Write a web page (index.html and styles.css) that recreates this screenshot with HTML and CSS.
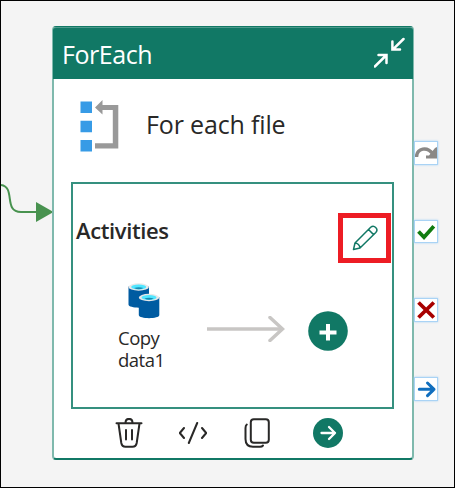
FILE: index.html
```html
<!DOCTYPE html>
<html lang="en">
<head>
<meta charset="utf-8">
<title>ForEach activity</title>
<link rel="stylesheet" href="styles.css">
</head>
<body>
<main class="canvas">
  <svg class="connector" viewBox="0 0 54 50" width="54" height="50"><path d="M0 5C15 7 2 32 20 32H38" fill="none" stroke="#48924f" stroke-width="2"/><path d="M35 22V42L52.500 32Z" fill="#48924f"/></svg>
  <section class="node">
    <header class="node-header">
      <h1 class="node-type">ForEach</h1>
      <svg class="collapse" viewBox="0 0 32 32" width="32" height="32" fill="none" stroke="#fff" stroke-width="2.500" stroke-linecap="round"><path d="M29.500 3L19 13.300M18.400 5.500V13.500H26M.8 30.500L12 19.500M4.500 19H12.500V27"/></svg>
    </header>
    <div class="title-row">
      <svg class="loop-icon" viewBox="0 0 40 52" width="40" height="52"><path fill="#379be6" d="M.5 1.500H12V13H.5ZM.5 20.700H12V32.200H.5ZM.5 40H12V51.500H.5Z"/><path fill="#999" d="M15 7.500L22.500 0V5H38.300V48.500H15V43.300H32.800V10H22.500V14.500Z"/></svg>
      <span class="node-name">For each file</span>
    </div>
    <div class="activities">
      <div class="activities-head">
        <h2 class="activities-title">Activities</h2>
        <button class="edit" aria-label="Edit"><svg viewBox="0 0 26 26" width="26" height="26" fill="none" stroke="#117865" stroke-width="1.500" stroke-linejoin="round"><path d="M1.500 24.500L3 18 18.700 2.300C22 -.7 27 4 23.800 7.500L8 23ZM3 18C5.500 18 8 20.500 8 23M16.500 4.500L21.600 9.600"/></svg></button>
      </div>
      <div class="flow">
        <div class="step">
          <svg viewBox="0 0 32 36" width="32" height="36"><path fill="#005ba1" d="M.5 3.500V21.500C.5 25.700 21 25.700 21 21.500V3.500Z"/><ellipse cx="10.700" cy="4" rx="10.200" ry="3.700" fill="#e8e8e8"/><ellipse cx="10.700" cy="4" rx="7.500" ry="2.400" fill="#50e6ff"/><path d="M6 5Q10.700 3.500 15.500 5Q10.700 7.500 6 5" fill="#198ab3"/><path fill="#005ba1" d="M10.800 14V32C10.800 36.200 31.300 36.200 31.300 32V14Z"/><ellipse cx="21" cy="14.500" rx="10.200" ry="3.700" fill="#e8e8e8"/><ellipse cx="21" cy="14.500" rx="7.500" ry="2.400" fill="#50e6ff"/><path d="M16.300 15.500Q21 14 25.800 15.500Q21 18 16.300 15.500" fill="#198ab3"/></svg>
          <span class="step-name">Copy data1</span>
        </div>
        <svg class="arrow" viewBox="0 0 78 26" width="78" height="26" fill="none" stroke="#c8c6c4" stroke-width="3.500"><path d="M0 13H76"/><path d="M63 1.500L75.500 13 63 24.500" stroke-linecap="round"/></svg>
        <button class="add" aria-label="Add"><svg viewBox="0 0 40 40" width="40" height="40"><circle cx="20" cy="20" r="19.800" fill="#117865"/><path d="M11.500 21.500H28.500M20 13V29.500" stroke="#fff" stroke-width="4"/></svg></button>
      </div>
    </div>
    <footer class="toolbar">
      <svg viewBox="0 0 28 30" width="28" height="30" fill="none" stroke="#292827" stroke-width="2" stroke-linecap="round" stroke-linejoin="round"><path d="M1.500 5.200H26.500M10.500 5C10.500 -.5 17.500 -.5 17.500 5M3.500 5.500L6.300 25Q7 28.700 10.500 28.700H17.500Q21 28.700 21.700 25L24.500 5.500M11 12V21.500M17 12V21.500"/></svg>
      <svg viewBox="0 0 28 22" width="28" height="22" fill="none" stroke="#292827" stroke-width="2" stroke-linecap="round" stroke-linejoin="round"><path d="M5 6L.8 11 5 16M18.200 1L9.800 21M23 6L27.200 11 23 16"/></svg>
      <svg viewBox="0 0 26 30" width="26" height="30" fill="none" stroke="#292827" stroke-width="2" stroke-linecap="round"><rect x="6.800" y="1.200" width="18" height="23.500" rx="3"/><path d="M2.800 6.500Q1.500 7.500 1.500 10V21Q1.500 28.700 9 28.700H16Q18 28.700 19 27.500"/></svg>
      <svg viewBox="0 0 30 30" width="30" height="30" fill="none"><circle cx="15" cy="15" r="15" fill="#117865"/><path d="M8.500 15H22M16 9L22 15 16 21" stroke="#fff" stroke-width="2.300" stroke-linecap="round" stroke-linejoin="round"/></svg>
    </footer>
  </section>
  <div class="ports">
    <span class="port"><svg viewBox="0 0 22 22" width="22" height="22"><path d="M1.500 15C2 6 12 4 18 12" fill="none" stroke="#8a8886" stroke-width="3.500"/><path d="M22 5V16.500H11V13.500H14L20 6Z" fill="#8a8886"/></svg></span>
    <span class="port"><svg viewBox="0 0 22 22" width="22" height="22" fill="none" stroke="#107c10" stroke-width="3.800"><path d="M3.500 10.500L9 16.200 18.800 5.200"/></svg></span>
    <span class="port"><svg viewBox="0 0 22 22" width="22" height="22" fill="none" stroke="#a80000" stroke-width="3.800"><path d="M3.500 3.500L18.800 18.500M18.800 3.500L3.500 18.500"/></svg></span>
    <span class="port"><svg viewBox="0 0 22 22" width="22" height="22" fill="none" stroke="#106ebe" stroke-width="3" stroke-linecap="round" stroke-linejoin="round"><path d="M4.300 11.300H19M12.500 5L19 11.300 12.500 17.600"/></svg></span>
  </div>
</main>
</body>
</html>
```
FILE: styles.css
```css
* { box-sizing: border-box; }
body { margin: 0; font-family: "Open Sans", sans-serif; color: #292827; }
h1, h2 { margin: 0; }
svg { display: block; flex: none; }
button { padding: 0; border: 0; background: none; }

.canvas {
  position: relative;
  width: 455px;
  height: 488px;
  border: 1px solid #000;
  background: #f4f4f4;
  overflow: hidden;
}
.connector { position: absolute; left: 0; top: 179px; }
.node {
  position: absolute;
  left: 51px;
  top: 25px;
  width: 362px;
  height: 434px;
  display: flex;
  flex-direction: column;
  border: 2px solid #7fb9ad;
  border-top: 1px solid #117865;
  border-bottom-color: #117865;
  border-radius: 4px;
  background: #fff;
}
.node-header {
  height: 52px;
  margin: 0 -1px;
  padding: 2px 7px 0 9px;
  display: flex;
  justify-content: space-between;
  border-top: 1px solid #4d9a8c;
  border-radius: 3px 3px 0 0;
  background: #117865;
  color: #fff;
}
.node-type {
  font-size: 25px;
  font-weight: 400;
  line-height: 49px;
  letter-spacing: -0.45px;
}
.collapse { margin-top: 6px; }
.title-row {
  height: 103px;
  padding: 21px 0 0 26px;
  display: flex;
  gap: 26px;
}
.node-name {
  font-size: 25px;
  line-height: 49px;
  letter-spacing: -0.15px;
  white-space: nowrap;
}
.activities {
  width: 323px;
  height: 227px;
  margin-left: 17px;
  border: 2px solid #35907f;
}
.activities-head {
  height: 79px;
  padding: 29px 1px 0 3px;
  display: flex;
  justify-content: space-between;
}
.activities-title {
  font-size: 22px;
  font-weight: 600;
  line-height: 34px;
  letter-spacing: -0.38px;
}
.edit {
  width: 53px;
  height: 50px;
  padding-bottom: 1px;
  display: grid;
  place-items: center;
  border: 5px solid #ed1c24;
}
.flow {
  display: flex;
  padding: 20px 0 0 45px;
}
.step { width: 89px; }
.step svg { margin-left: 10px; }
.step-name {
  display: block;
  width: 60px;
  margin-top: 8px;
  font-size: 18.500px;
  line-height: 22px;
  letter-spacing: -0.5px;
}
.arrow { margin-top: 33px; }
.add { margin: 28px 0 0 23px; height: 40px; }
.toolbar {
  flex: 1;
  display: flex;
  align-items: center;
  padding: 0 0 2px 61px;
}
.toolbar svg:nth-child(2) { margin-left: 36px; }
.toolbar svg:nth-child(3) { margin-left: 37px; }
.toolbar svg:nth-child(4) { margin-left: 43px; }
.ports {
  position: absolute;
  left: 413px;
  top: 140px;
  display: grid;
  gap: 55px;
}
.port {
  width: 24px;
  height: 23.700px;
  border: 1px solid #a9d3f5;
  background: #fff;
  box-shadow: 0 0 2px #a9d3f5;
}
```
